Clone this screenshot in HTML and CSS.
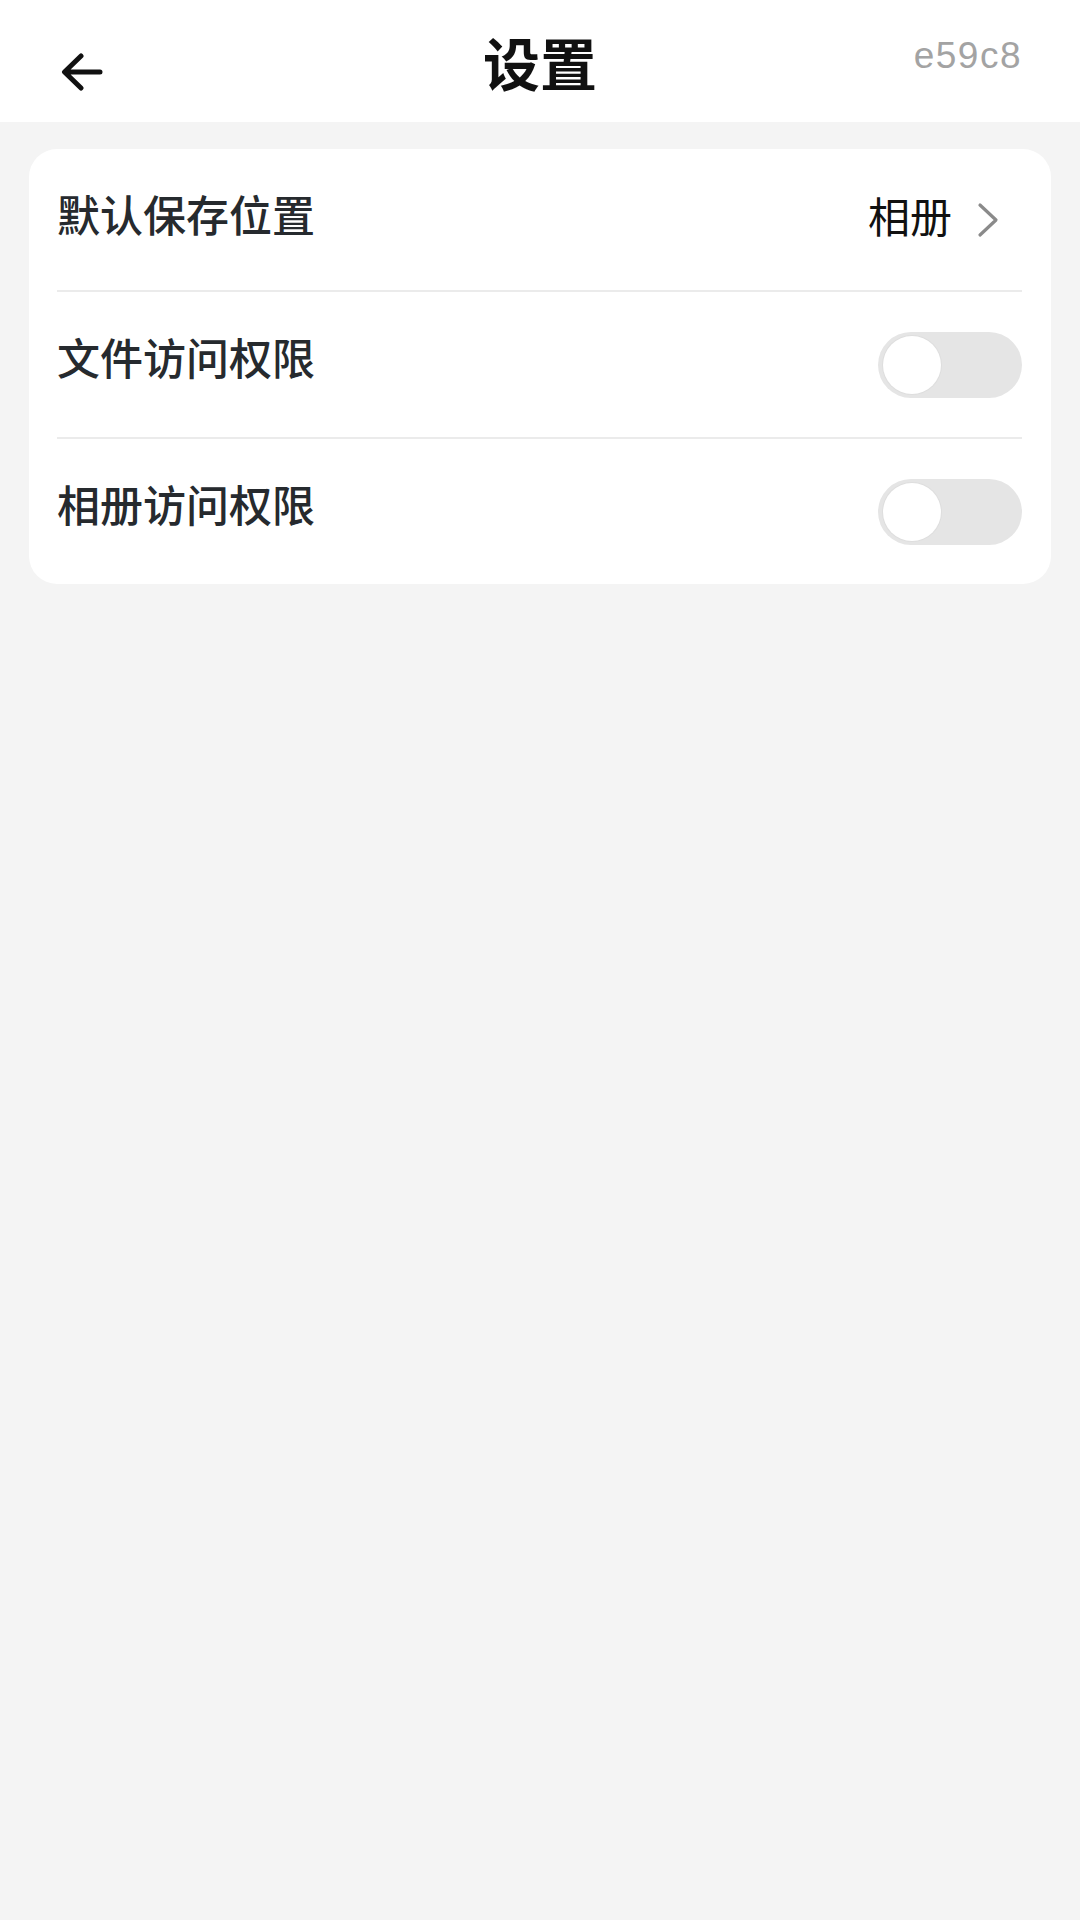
FILE: index.html
```html
<!DOCTYPE html>
<html lang="zh-CN">
<head>
<meta charset="utf-8">
<title>设置</title>
<link rel="stylesheet" href="styles.css">
</head>
<body>
<div class="page">
  <header class="topbar">
    <div class="back">
      <svg width="42" height="38" viewBox="0 0 42 38" aria-hidden="true">
        <path d="M39 19 H4 M20 3 L3.5 19 L20 35" fill="none" stroke="#111" stroke-width="5" stroke-linecap="round" stroke-linejoin="round"/>
      </svg>
    </div>
    <h1 class="title">设置</h1>
    <div class="code">e59c8</div>
  </header>

  <section class="card">
    <div class="row">
      <span class="label">默认保存位置</span>
      <span class="value">
        <span class="value-text">相册</span>
        <svg class="chev" width="24" height="36" viewBox="0 0 24 36" aria-hidden="true">
          <path d="M4 3 L20 18 L4 33" fill="none" stroke="#8a8a8a" stroke-width="3.2" stroke-linecap="round" stroke-linejoin="round"/>
        </svg>
      </span>
    </div>
    <div class="row">
      <span class="label">文件访问权限</span>
      <span class="toggle"><span class="knob"></span></span>
    </div>
    <div class="row">
      <span class="label">相册访问权限</span>
      <span class="toggle"><span class="knob"></span></span>
    </div>
  </section>
</div>
</body>
</html>
```

FILE: styles.css
```css
html, body {
  margin: 0;
  padding: 0;
}
body {
  background: #f4f4f4;
  font-family: "Noto Sans CJK SC", "Noto Sans", sans-serif;
  width: 1080px;
  min-height: 1920px;
}
.page {
  width: 1080px;
  min-height: 1920px;
  background: #f4f4f4;
}
.topbar {
  height: 122px;
  background: #ffffff;
  display: grid;
  grid-template-columns: 1fr auto 1fr;
  align-items: start;
}
.back {
  padding-top: 53px;
  padding-left: 61px;
  height: 38px;
}
.back svg {
  display: block;
}
.title {
  margin: 33px 0 0;
  font-size: 57px;
  line-height: 57px;
  font-weight: 700;
  color: #111;
}
.code {
  justify-self: end;
  margin-top: 37px;
  padding-right: 58px;
  font-family: "Liberation Sans", Arial, sans-serif;
  font-size: 37px;
  line-height: 37px;
  letter-spacing: 1.5px;
  color: #a3a3a3;
}
.card {
  margin: 27px 29px 0;
  background: #ffffff;
  border-radius: 28px;
  padding: 0 29px 0 28px;
}
.row {
  height: 145px;
  display: flex;
  align-items: center;
  justify-content: space-between;
}
.row:first-child {
  height: 141px;
}
.row + .row {
  border-top: 2px solid #ebebeb;
}
.label {
  font-size: 43px;
  line-height: 43px;
  font-weight: 500;
  color: #262a2e;
  padding-bottom: 13px;
}
.row + .row .label {
  padding-bottom: 16px;
}
.value {
  display: flex;
  align-items: center;
  gap: 24px;
}
.value-text {
  font-size: 42px;
  line-height: 42px;
  color: #111;
  padding-bottom: 10px;
}
.chev {
  display: block;
  margin-right: 22px;
}
.toggle {
  width: 144px;
  height: 66px;
  border-radius: 33px;
  background: #e5e5e5;
  display: flex;
  align-items: center;
  padding-left: 5px;
  box-sizing: border-box;
}
.knob {
  width: 58px;
  height: 58px;
  border-radius: 50%;
  background: #ffffff;
  box-shadow: 0 0 0 1px #dedede;
}
```
